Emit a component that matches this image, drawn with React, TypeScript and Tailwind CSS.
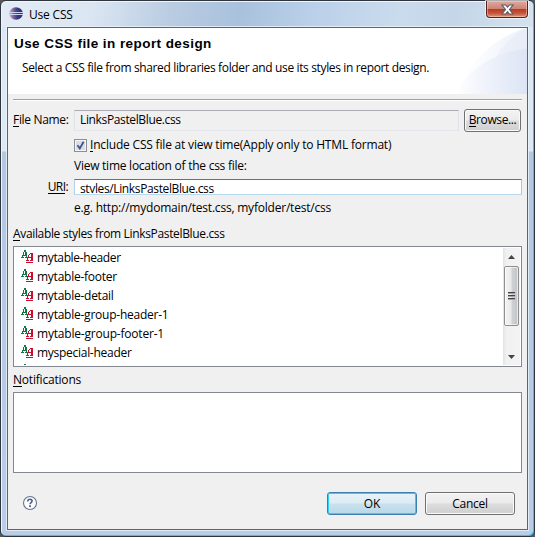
import React from "react";

function EclipseLogo() {
  return (
    <svg width="14" height="14" viewBox="0 0 14 14" className="block">
      <defs>
        <linearGradient id="ecl" x1="0" x2="1">
          <stop offset="0" stopColor="#e3b3ba" />
          <stop offset="0.35" stopColor="#6c5f9c" />
          <stop offset="0.6" stopColor="#3f3a86" />
          <stop offset="1" stopColor="#2b2a6c" />
        </linearGradient>
      </defs>
      <ellipse cx="7" cy="6.5" rx="6.8" ry="6.2" fill="url(#ecl)" />
      <path d="M1 5.5H14M1 7.5H14" stroke="#cfd4ee" strokeWidth="1" />
    </svg>
  );
}

function StyleIcon() {
  return (
    <svg width="13" height="14" viewBox="0 0 13 14" shapeRendering="crispEdges" className="block shrink-0">
      <path
        fill="#0b7a45"
        d="M3 0h2v1h-2zM3 1h2v1h-2zM2 2h1v1h-1zM4 2h2v1h-2zM2 3h1v2h-1zM4 3h2v2h-2zM1 5h5v1h-5zM1 6h1v1h-1zM5 6h1v1h-1zM0 7h3v1h-3zM4 7h2v1h-2z"
      />
      <path
        fill="#c8102e"
        d="M9 3h3v1h-3zM8 4h1v1h-1zM10 4h2v6h-2zM7 5h1v2h-1zM6 7h5v1h-5zM6 8h1v2h-1zM5 10h3v1h-3zM9 10h3v1h-3zM5 12h7v1h-7z"
      />
    </svg>
  );
}

const styles = [
  { name: "mytable-header", track: "tracking-[-0.36px]" },
  { name: "mytable-footer", track: "tracking-[-0.25px]" },
  { name: "mytable-detail", track: "tracking-[-0.25px]" },
  { name: "mytable-group-header-1", track: "tracking-[-0.24px]" },
  { name: "mytable-group-footer-1", track: "tracking-[-0.2px]" },
  { name: "myspecial-header", track: "tracking-[-0.28px]" },
  { name: "", track: "" },
];

function Mn({ children }: { children: string }) {
  return <span className="inline-block h-[13px] border-b border-black leading-[12px]">{children}</span>;
}

export default function App() {
  return (
    <div className="h-[545px] w-[549px] overflow-hidden bg-white font-['Open_Sans','Noto_Sans',sans-serif] text-[12px] leading-[16px] text-black">
      <div className="h-[537px] w-[535px] bg-[#55585c]">
        <div className="flex h-[537px] w-[535px] flex-col rounded-[6px] border border-[#30353d] bg-[linear-gradient(180deg,#dce8f3_0px,#dce8f3_150px,#b2c8e0_151px,#b9cee6_100%)] shadow-[inset_-1px_-1px_0_#35c5f0,inset_1px_1px_0_#eef6fc]">
          <div className="mx-px mt-px flex h-[25px] shrink-0 justify-between rounded-t-[5px] bg-[linear-gradient(100deg,#e2ebf5_0%,#dbe6f2_17%,#b9cce2_32%,#a9c1dc_45%,#bad0e9_58%,#cadbed_75%,#c4d6e8_85%,#d3e2ee_100%)] pl-[7px]">
            <div className="flex items-start gap-[6px] pt-[5px]">
              <EclipseLogo />
              <span className="tracking-[-0.2px]">Use CSS</span>
            </div>
            <div className="mr-[5px] -mt-px flex h-[17px] w-[42px] items-center justify-center rounded-b-[4px] border border-t-0 border-[#5b1f22] bg-[linear-gradient(180deg,#e0a99d_0%,#cf8375_48%,#b63c28_52%,#c4533a_75%,#df9577_100%)] shadow-[inset_0_0_0_1px_rgba(255,220,210,0.45),0_0_0_1px_rgba(255,255,255,0.6)]">
              <svg width="13" height="11" viewBox="0 0 13 11">
                <path
                  d="M1 1h3.6l1.9 2.2L8.4 1H12L8.5 5.4 12 10H8.4L6.5 7.7 4.6 10H1l3.5-4.6z"
                  fill="#fff"
                  stroke="#545c6b"
                  strokeWidth="1.1"
                />
              </svg>
            </div>
          </div>

          <div className="ml-[6px] flex h-[503px] w-[521px] flex-col border border-[#5a6472] bg-[#f0f0f0] shadow-[0_0_0_1px_rgba(235,244,252,0.8)]">
            <div className="flex h-[66px] shrink-0 justify-between bg-white">
              <div className="pl-[6px] pt-[8px]">
                <div className="whitespace-nowrap font-['Liberation_Sans',Arial,sans-serif] text-[13.5px] font-bold leading-[16px] tracking-[0.43px]">
                  Use CSS file in report design
                </div>
                <div className="mt-[8px] whitespace-nowrap pl-[8px] tracking-[-0.36px]">
                  Select a CSS file from shared libraries folder and use its styles in report design.
                </div>
              </div>
              <svg width="72" height="66" viewBox="0 0 72 66" className="block shrink-0">
                <defs>
                  <linearGradient id="swA" x1="0" x2="1">
                    <stop offset="0" stopColor="#fff" />
                    <stop offset="0.4" stopColor="#fafbfe" />
                    <stop offset="1" stopColor="#eaeff9" />
                  </linearGradient>
                  <linearGradient id="swB" x1="0" x2="1">
                    <stop offset="0" stopColor="#fff" />
                    <stop offset="0.5" stopColor="#edf1fa" />
                    <stop offset="1" stopColor="#dce4f5" />
                  </linearGradient>
                </defs>
                <path d="M0 66C14 34 40 8 72 0V66z" fill="url(#swA)" />
                <path d="M26 66C34 34 50 10 72 0V66z" fill="#e3eaf7" opacity="0.5" />
                <path d="M0 66C14 40 42 23 72 21V66z" fill="url(#swB)" />
              </svg>
            </div>

            <div className="mx-[5px] mt-[5px] h-[2px] shrink-0 border-b border-t border-b-white border-t-[#a0a0a0]" />

            <div className="ml-[5px] mt-[7px] flex h-[24px] shrink-0 items-center">
              <div className="w-[61px] whitespace-nowrap tracking-[-0.32px]">
                <Mn>F</Mn>ile Name:
              </div>
              <div className="flex h-[21px] w-[385px] items-center border border-b-[#e3e5ea] border-l-[#e0e2e8] border-r-[#dfe2e8] border-t-[#ababb3] pl-[5px] tracking-[-0.36px]">
                LinksPastelBlue.css
              </div>
              <div className="ml-[5px] flex h-[23px] w-[57px] items-center justify-center whitespace-nowrap rounded-[3px] border border-[#707070] bg-[linear-gradient(180deg,#f2f2f2_0%,#ebebeb_48%,#dddddd_52%,#cfcfcf_100%)] tracking-[-0.4px] shadow-[inset_0_0_0_1px_#fafafa]">
                <Mn>B</Mn>rowse...
              </div>
            </div>

            <div className="ml-[66px] mt-[5px] flex h-[16px] shrink-0 items-center">
              <div className="flex size-[13px] items-center justify-center border border-[#8e8f8f] bg-[#f4f4f4]">
                <svg width="9" height="9" viewBox="0 0 9 9" className="bg-[#d9dee6]">
                  <path d="M1.4 4.2L3.8 7.4 7.6 0.8" fill="none" stroke="#41518f" strokeWidth="1.8" />
                </svg>
              </div>
              <span className="ml-[3px] whitespace-nowrap tracking-[-0.19px]">
                <Mn>I</Mn>nclude CSS file at view time(Apply only to HTML format)
              </span>
            </div>

            <div className="ml-[66px] mt-[5px] h-[16px] shrink-0 whitespace-nowrap tracking-[-0.25px]">
              View time location of the css file:
            </div>

            <div className="ml-[5px] mt-[5px] flex h-[16px] shrink-0">
              <div className="w-[61px] pr-[6px] text-right tracking-[-0.6px]">
                <Mn>URI</Mn>:
              </div>
              <div className="h-[16px] w-[448px] overflow-hidden border border-b-[#b7d9ed] border-l-[#b5cfe7] border-r-[#a4c9e3] border-t-[#3d7bad] bg-white pl-[5px]">
                <div className="mt-px h-[12px] overflow-hidden leading-[16px] tracking-[-0.37px]">styles/LinksPastelBlue.css</div>
              </div>
            </div>

            <div className="ml-[66px] mt-[5px] h-[16px] shrink-0 whitespace-nowrap tracking-[-0.21px]">
              e.g. http://mydomain/test.css, myfolder/test/css
            </div>
            <div className="ml-[5px] mt-[10px] h-[16px] shrink-0 whitespace-nowrap tracking-[-0.345px]">
              <Mn>A</Mn>vailable styles from LinksPastelBlue.css
            </div>

            <div className="ml-[5px] mt-[4px] flex h-[121px] w-[509px] shrink-0 justify-between border border-[#828790] bg-white p-px">
              <div className="overflow-hidden pl-[6px]">
                {styles.map((s, i) => (
                  <div key={i} className="flex h-[19px] gap-[3px] pt-[2px]">
                    <StyleIcon />
                    <span className={"whitespace-nowrap " + s.track}>{s.name}</span>
                  </div>
                ))}
              </div>
              <div className="flex w-[17px] flex-col items-center bg-[linear-gradient(90deg,#e3e3e3_0%,#f1f1f1_20%,#f3f3f3_100%)]">
                <svg width="7" height="4" viewBox="0 0 7 4" className="mt-[7px] block shrink-0">
                  <path d="M0 4L3.5 0 7 4z" fill="#444" />
                </svg>
                <div className="mt-[7px] flex h-[60px] w-[15px] flex-col items-center justify-center gap-px rounded-[2px] border border-[#8f8f8f] bg-[linear-gradient(90deg,#f5f5f5_0%,#e9e9eb_45%,#d0d1d4_55%,#c2c3c7_100%)] shadow-[inset_0_0_0_1px_rgba(255,255,255,0.6)]">
                  {[0, 1, 2].map((n) => (
                    <div key={n} className="h-[2px] w-[7px] border-t border-t-[#444] bg-[#a6a6a6]" />
                  ))}
                </div>
                <svg width="7" height="4" viewBox="0 0 7 4" className="mt-[29px] block shrink-0">
                  <path d="M0 0L3.5 4 7 0z" fill="#444" />
                </svg>
              </div>
            </div>

            <div className="ml-[5px] mt-[5px] h-[16px] shrink-0 tracking-[-0.2px]">
              <Mn>N</Mn>otifications
            </div>
            <div className="ml-[5px] mt-[4px] h-[81px] w-[509px] shrink-0 border border-[#828790] bg-white" />

            <div className="ml-[14px] mr-[12px] mt-[19px] flex h-[23px] shrink-0 items-center">
              <svg width="16" height="16" viewBox="0 0 16 16" className="-mt-px block">
                <circle cx="8" cy="8" r="6.5" fill="#fdfdff" stroke="#637592" strokeWidth="1.1" />
                <path d="M5.8 6.4C5.8 3.6 10.2 3.7 10.1 6.1 10.1 7.5 8 7.6 8 9.3" fill="none" stroke="#4c6180" strokeWidth="1.6" />
                <rect x="7.1" y="10.3" width="1.8" height="1.8" fill="#4c6180" />
              </svg>
              <div className="ml-auto flex h-[23px] w-[90px] items-center justify-center rounded-[3px] border border-[#3c7fb1] bg-[linear-gradient(180deg,#e9f3f8_0%,#dcecf4_48%,#c9e1ee_52%,#b8d8ea_100%)] tracking-[-0.2px] shadow-[inset_0_0_0_1px_#2fd0fa]">
                OK
              </div>
              <div className="ml-[8px] flex h-[23px] w-[90px] items-center justify-center rounded-[3px] border border-[#707070] bg-[linear-gradient(180deg,#f2f2f2_0%,#ebebeb_48%,#dddddd_52%,#cfcfcf_100%)] tracking-[-0.25px] shadow-[inset_0_0_0_1px_#fafafa]">
                Cancel
              </div>
            </div>
          </div>
        </div>
      </div>
    </div>
  );
}
